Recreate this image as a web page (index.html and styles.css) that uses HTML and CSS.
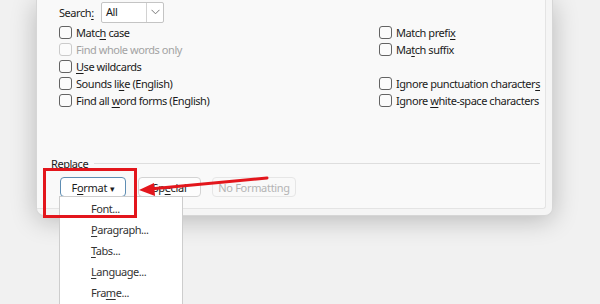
FILE: index.html
```html
<!DOCTYPE html>
<html lang="en">
<head>
    <meta charset="UTF-8">
    <meta name="viewport" content="width=device-width, initial-scale=1.0">
    <title>Find and Replace - More options</title>
    <link rel="stylesheet" href="styles.css">
</head>
<body>
<div class="dialog">
    <div class="panel">
        <div class="search-row">
            <span class="label">Search<u>:</u></span>
            <div class="select">
                <span class="select-value">All</span>
                <span class="select-arrow">
                    <svg width="9" height="6" viewBox="0 0 9 6"><path d="M0.5 0.8 L4.5 4.8 L8.5 0.8" fill="none" stroke="#777" stroke-width="1"/></svg>
                </span>
            </div>
        </div>
        <div class="options">
            <div class="col">
                <label class="check"><span class="box"></span><span>Matc<u>h</u> case</span></label>
                <label class="check disabled"><span class="box"></span><span>Find whole words only</span></label>
                <label class="check"><span class="box"></span><span><u>U</u>se wildcards</span></label>
                <label class="check"><span class="box"></span><span>Sounds li<u>k</u>e (English)</span></label>
                <label class="check"><span class="box"></span><span>Find all <u>w</u>ord forms (English)</span></label>
            </div>
            <div class="col">
                <label class="check"><span class="box"></span><span>Match prefi<u>x</u></span></label>
                <label class="check"><span class="box"></span><span>Ma<u>t</u>ch suffix</span></label>
                <div class="check"></div>
                <label class="check"><span class="box"></span><span>Ignore punctuation character<u>s</u></span></label>
                <label class="check"><span class="box"></span><span>Ignore <u>w</u>hite-space characters</span></label>
            </div>
        </div>
        <div class="group-title">
            <span>Replace</span>
            <div class="rule"></div>
        </div>
        <div class="buttons">
            <div class="format-wrap">
                <button class="btn btn-focus">F<u>o</u>rmat <span class="caret">&#9662;</span></button>
                <div class="menu">
                    <div class="menu-item"><u>F</u>ont...</div>
                    <div class="menu-item"><u>P</u>aragraph...</div>
                    <div class="menu-item"><u>T</u>abs...</div>
                    <div class="menu-item"><u>L</u>anguage...</div>
                    <div class="menu-item">Fra<u>m</u>e...</div>
                </div>
            </div>
            <button class="btn btn-special">Sp<u>e</u>cial</button>
            <button class="btn btn-none" disabled>No Formatting</button>
        </div>
    </div>
</div>

<!-- annotation drawn over the screenshot -->
<div class="highlight"></div>
<svg class="arrow" width="600" height="304" viewBox="0 0 600 304">
    <path d="M267 178 L150 189" stroke="#e3161c" stroke-width="3" stroke-linecap="round"/>
    <path d="M139 190 L154 183 L155 196 Z" fill="#e3161c"/>
</svg>
</body>
</html>
```

FILE: styles.css
```css
body {
    margin: 0;
    height: 304px;
    overflow: hidden;
    position: relative;
    background-color: #f1f1f1;
    font-family: "Noto Sans", "Open Sans", sans-serif;
    font-size: 11px;
    letter-spacing: -0.45px;
    color: #1b1b1b;
}
u {
    text-decoration-thickness: 1px;
    text-underline-offset: 2px;
}
.dialog {
    margin-left: 36px;
    width: 515px;
    background-color: #f5f5f5;
    border: 1px solid #d6d6d6;
    border-top: none;
    border-radius: 0 0 8px 8px;
    box-shadow: 0 4px 26px rgba(0, 0, 0, 0.24);
    padding-bottom: 6px;
}
.panel {
    margin-right: 6px;
    background-color: #f9f9f9;
    border-right: 1px solid #e4e4e4;
    border-bottom: 1px solid #e4e4e4;
    border-radius: 0 0 3px 0;
    padding: 2px 5px 11px 22px;
}
.search-row {
    display: flex;
    align-items: center;
    height: 20px;
}
.label {
    width: 42px;
}
.select {
    display: flex;
    width: 61px;
    height: 19px;
    background-color: #fff;
    border: 1px solid #c4c4c4;
    border-radius: 2px;
}
.select-value {
    flex: 1;
    padding-left: 4px;
    line-height: 18px;
}
.select-arrow {
    width: 16px;
    border-left: 1px solid #d2d2d2;
    display: flex;
    align-items: center;
    justify-content: center;
}
.options {
    display: grid;
    grid-template-columns: 320px 1fr;
    margin-top: 2px;
}
.check {
    display: flex;
    align-items: center;
    height: 17px;
    white-space: nowrap;
}
.box {
    width: 11px;
    height: 11px;
    border: 1px solid #636363;
    border-radius: 3px;
    background-color: #fbfbfb;
    margin-right: 4px;
}
.disabled {
    color: #a3a3a3;
}
.disabled .box {
    border-color: #cbcbcb;
}
.group-title {
    display: flex;
    align-items: center;
    gap: 6px;
    margin: 47px 0 0 -8px;
    height: 14px;
}
.rule {
    flex: 1;
    height: 1px;
    background-color: #dedede;
}
.buttons {
    display: flex;
    margin-top: 7px;
    margin-left: 1px;
}
.btn {
    height: 20px;
    padding: 0;
    font-family: inherit;
    font-size: 11px;
    letter-spacing: -0.3px;
    white-space: nowrap;
    color: #1b1b1b;
    background-color: #fdfdfd;
    border: 1px solid #d3d3d3;
    border-radius: 4px;
}
.btn-focus {
    width: 66px;
    background-color: #fff;
    border-color: #5e8db3;
}
.btn-special {
    width: 63px;
    margin-left: 12px;
}
.btn-none {
    width: 84px;
    margin-left: 11px;
}
.btn:disabled {
    color: #b4b4b4;
    background-color: #f9f9f9;
    border-color: #e6e6e6;
}
.caret {
    font-size: 9px;
}
.format-wrap {
    position: relative;
}
.menu {
    position: absolute;
    left: -1px;
    top: 19px;
    width: 122px;
    height: 120px;
    background-color: #fff;
    border: 1px solid #cdcdcd;
    padding-top: 1px;
    z-index: 2;
}
.menu-item {
    height: 21px;
    line-height: 21px;
    padding-left: 31px;
    color: #333;
}
.highlight {
    position: absolute;
    left: 43px;
    top: 168px;
    width: 88px;
    height: 44px;
    border: 3px solid #e3161c;
    z-index: 3;
}
.arrow {
    position: absolute;
    left: 0;
    top: 0;
    z-index: 3;
}
```
